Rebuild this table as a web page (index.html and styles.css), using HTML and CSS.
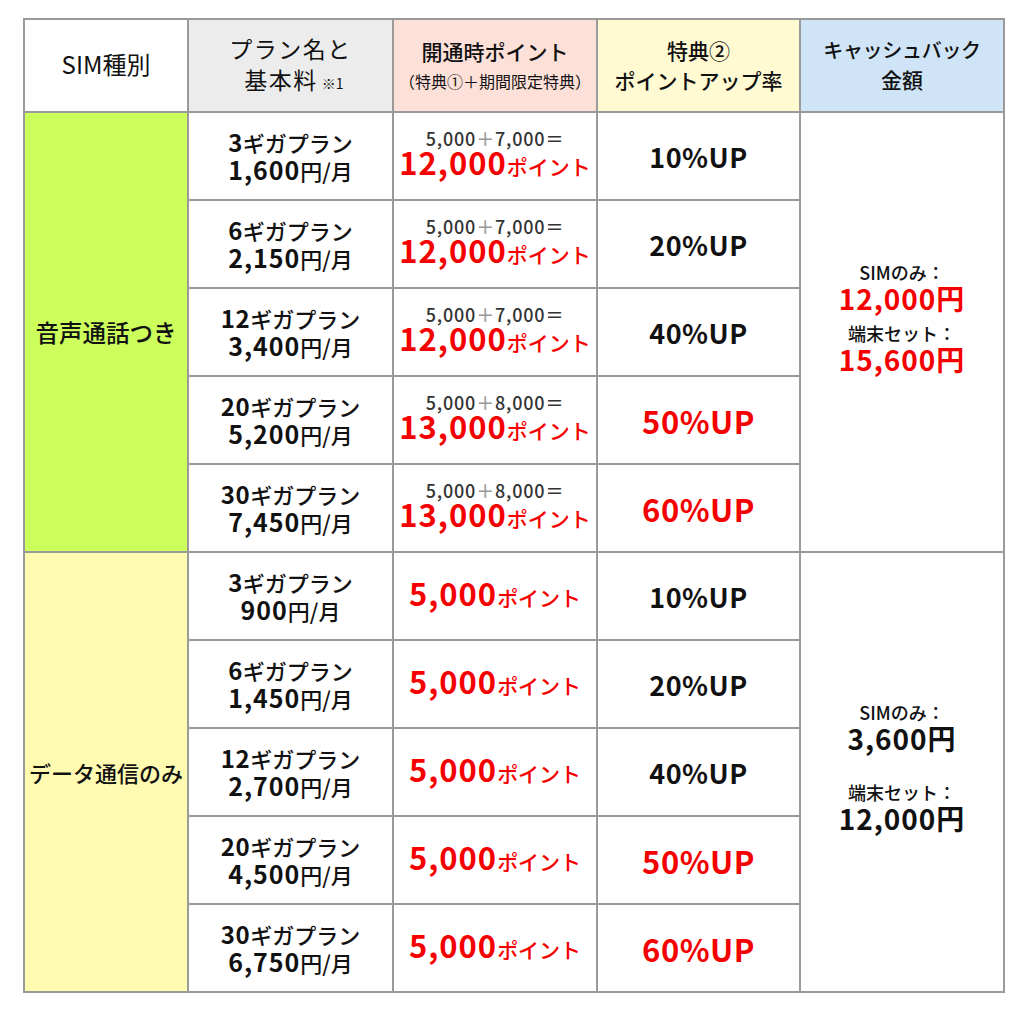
FILE: index.html
```html
<!DOCTYPE html>
<html lang="ja">
<head>
<meta charset="utf-8">
<link rel="stylesheet" href="styles.css">
</head>
<body>
<div class="wrap">
<table class="plan">
  <colgroup>
    <col class="c1"><col class="c2"><col class="c3"><col class="c4"><col class="c5">
  </colgroup>
  <thead>
    <tr class="head">
      <th class="h-white"><span class="hl">SIM種別</span></th>
      <th class="h-gray"><span class="hl sp">プラン名と</span><br><span class="hl sp">&nbsp;基本料</span><span class="note">※1</span></th>
      <th class="h-pink"><span class="hm">開通時ポイント</span><br><span class="hs">（特典①＋期間限定特典）</span></th>
      <th class="h-yellow"><span class="hm">特典②</span><br><span class="hm">ポイントアップ率</span></th>
      <th class="h-blue"><span class="hm hc">キャッシュバック</span><br><span class="hm">金額</span></th>
    </tr>
  </thead>
  <tbody>
    <tr>
      <td class="type green" rowspan="5"><span class="t-voice">音声通話つき</span></td>
      <td class="plan-name"><div><b>3</b>ギガプラン</div><div><b>1,600</b>円/月</div></td>
      <td class="pts calc-cell"><div class="calc">5,000<span class="plus">＋</span>7,000＝</div><div class="total"><span class="big">12,000</span><span class="pt">ポイント</span></div></td>
      <td class="up">10%UP</td>
      <td class="cash cash-voice" rowspan="5">
        <div class="cb-label">SIMのみ：</div>
        <div class="cb-num red">12,000円</div>
        <div class="cb-label second">端末セット：</div>
        <div class="cb-num red">15,600円</div>
      </td>
    </tr>
    <tr>
      <td class="plan-name"><div><b>6</b>ギガプラン</div><div><b>2,150</b>円/月</div></td>
      <td class="pts calc-cell"><div class="calc">5,000<span class="plus">＋</span>7,000＝</div><div class="total"><span class="big">12,000</span><span class="pt">ポイント</span></div></td>
      <td class="up">20%UP</td>
    </tr>
    <tr>
      <td class="plan-name"><div><b>12</b>ギガプラン</div><div><b>3,400</b>円/月</div></td>
      <td class="pts calc-cell"><div class="calc">5,000<span class="plus">＋</span>7,000＝</div><div class="total"><span class="big">12,000</span><span class="pt">ポイント</span></div></td>
      <td class="up">40%UP</td>
    </tr>
    <tr>
      <td class="plan-name"><div><b>20</b>ギガプラン</div><div><b>5,200</b>円/月</div></td>
      <td class="pts calc-cell"><div class="calc">5,000<span class="plus">＋</span>8,000＝</div><div class="total"><span class="big">13,000</span><span class="pt">ポイント</span></div></td>
      <td class="up red">50%UP</td>
    </tr>
    <tr>
      <td class="plan-name"><div><b>30</b>ギガプラン</div><div><b>7,450</b>円/月</div></td>
      <td class="pts calc-cell"><div class="calc">5,000<span class="plus">＋</span>8,000＝</div><div class="total"><span class="big">13,000</span><span class="pt">ポイント</span></div></td>
      <td class="up red">60%UP</td>
    </tr>
    <tr>
      <td class="type yellow" rowspan="5"><span class="t-data">データ通信のみ</span></td>
      <td class="plan-name"><div><b>3</b>ギガプラン</div><div><b>900</b>円/月</div></td>
      <td class="pts"><div class="total single"><span class="big">5,000</span><span class="pt">ポイント</span></div></td>
      <td class="up">10%UP</td>
      <td class="cash cash-data" rowspan="5">
        <div class="cb-label">SIMのみ：</div>
        <div class="cb-num">3,600円</div>
        <div class="cb-label second">端末セット：</div>
        <div class="cb-num">12,000円</div>
      </td>
    </tr>
    <tr>
      <td class="plan-name"><div><b>6</b>ギガプラン</div><div><b>1,450</b>円/月</div></td>
      <td class="pts"><div class="total single"><span class="big">5,000</span><span class="pt">ポイント</span></div></td>
      <td class="up">20%UP</td>
    </tr>
    <tr>
      <td class="plan-name"><div><b>12</b>ギガプラン</div><div><b>2,700</b>円/月</div></td>
      <td class="pts"><div class="total single"><span class="big">5,000</span><span class="pt">ポイント</span></div></td>
      <td class="up">40%UP</td>
    </tr>
    <tr>
      <td class="plan-name"><div><b>20</b>ギガプラン</div><div><b>4,500</b>円/月</div></td>
      <td class="pts"><div class="total single"><span class="big">5,000</span><span class="pt">ポイント</span></div></td>
      <td class="up red">50%UP</td>
    </tr>
    <tr>
      <td class="plan-name"><div><b>30</b>ギガプラン</div><div><b>6,750</b>円/月</div></td>
      <td class="pts"><div class="total single"><span class="big">5,000</span><span class="pt">ポイント</span></div></td>
      <td class="up red">60%UP</td>
    </tr>
  </tbody>
</table>
</div>
</body>
</html>
```

FILE: styles.css
```css
* { box-sizing: border-box; }
html, body { margin: 0; padding: 0; background: #fff; }
body {
  font-family: "Noto Sans CJK JP", "Noto Sans", sans-serif;
  color: #111;
}
.wrap { padding: 18px 0 0 23px; }
.plan {
  border-collapse: collapse;
  table-layout: fixed;
  width: 980px;
}
.c1 { width: 164px; }
.c2 { width: 205px; }
.c3 { width: 204px; }
.c4 { width: 203px; }
.c5 { width: 204px; }
.plan th, .plan td {
  border: 2px solid #9a9a9a;
  text-align: center;
  vertical-align: middle;
  padding: 0;
}
.head { height: 93px; }
.plan tbody tr { height: 88px; }
.h-white { background: #fff; }
.h-gray { background: #ececec; }
.h-pink { background: #fde1d9; }
.h-yellow { background: #fffad2; }
.h-blue { background: #d0e4f8; }
.plan th { font-weight: 400; line-height: 28px; }
.hl { font-size: 23px; font-weight: 400; }
.h-white .hl { font-size: 24px; }
.hl.sp { letter-spacing: 1.5px; }
.hm { font-size: 21px; font-weight: 500; }
.hm.hc { font-size: 20px; letter-spacing: -0.3px; }
.hs { font-size: 16px; font-weight: 400; }
.note { font-size: 14px; margin-left: 4px; }
.type { font-weight: 500; }
.t-voice { font-size: 23.5px; }
.t-data { font-size: 22px; }
.green { background: #cdff5c; }
.yellow { background: #fffbb1; }
.plan-name {
  font-size: 22px;
  font-weight: 500;
  line-height: 27px;
}
.plan-name b { font-size: 24px; font-weight: 700; letter-spacing: 0.5px; }
.plan-name div + div b { font-size: 25px; letter-spacing: 1px; }
.plan td.calc-cell { vertical-align: top; padding-top: 15px; }
.calc {
  font-size: 18px;
  font-weight: 500;
  color: #333;
  line-height: 20px;
  letter-spacing: 0.8px;
}
.plus { color: #999; }
.total { line-height: 28px; color: #f50000; }
.total.single { line-height: 36px; }
.big { font-size: 31px; font-weight: 700; letter-spacing: 1px; }
.pt { font-size: 21px; font-weight: 500; }
.up { font-size: 27px; font-weight: 700; letter-spacing: 0.5px; }
.up.red { font-size: 31px; color: #f50000; }
.plan td.cash { vertical-align: top; padding-top: 147px; }
.cb-label { font-size: 18px; font-weight: 500; line-height: 24px; }
.cb-num { font-size: 28px; font-weight: 700; line-height: 28px; letter-spacing: 1px; }
.cb-num.red { color: #f50000; }
.cash-voice .second { margin-top: 9px; }
.cash-data .second { margin-top: 28px; }
```
